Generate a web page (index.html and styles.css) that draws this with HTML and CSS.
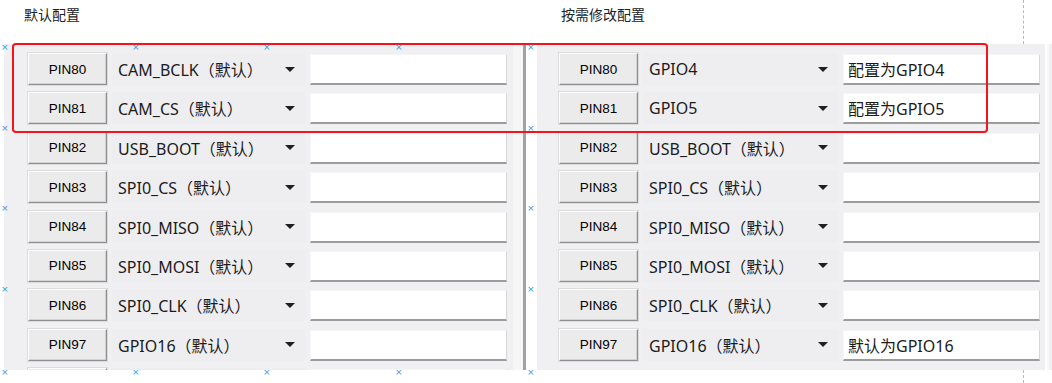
FILE: index.html
```html
<!DOCTYPE html>
<html lang="zh-CN">
<head>
    <meta charset="UTF-8">
    <title>引脚配置</title>
    <link rel="stylesheet" href="styles.css">
</head>
<body>
    <div class="canvas">
        <div class="title title-left">默认配置</div>
        <div class="title title-right">按需修改配置</div>

        <!-- 默认配置 -->
        <div class="panel panel-left">
            <div class="row"><button class="pin-btn">PIN80</button><div class="combo"><span>CAM_BCLK（默认）</span><i class="arrow"></i></div><input class="value" type="text"></div>
            <div class="row"><button class="pin-btn">PIN81</button><div class="combo"><span>CAM_CS（默认）</span><i class="arrow"></i></div><input class="value" type="text"></div>
            <div class="row"><button class="pin-btn">PIN82</button><div class="combo"><span>USB_BOOT（默认）</span><i class="arrow"></i></div><input class="value" type="text"></div>
            <div class="row"><button class="pin-btn">PIN83</button><div class="combo"><span>SPI0_CS（默认）</span><i class="arrow"></i></div><input class="value" type="text"></div>
            <div class="row"><button class="pin-btn">PIN84</button><div class="combo"><span>SPI0_MISO（默认）</span><i class="arrow"></i></div><input class="value" type="text"></div>
            <div class="row"><button class="pin-btn">PIN85</button><div class="combo"><span>SPI0_MOSI（默认）</span><i class="arrow"></i></div><input class="value" type="text"></div>
            <div class="row"><button class="pin-btn">PIN86</button><div class="combo"><span>SPI0_CLK（默认）</span><i class="arrow"></i></div><input class="value" type="text"></div>
            <div class="row"><button class="pin-btn">PIN97</button><div class="combo"><span>GPIO16（默认）</span><i class="arrow"></i></div><input class="value" type="text"></div>
            <!-- 下一行只露出顶边 -->
            <div class="row"><button class="pin-btn"></button><div class="combo"></div><input class="value" type="text"></div>
        </div>

        <div class="splitter"><div class="splitter-line"></div></div>

        <!-- 按需修改配置 -->
        <div class="panel panel-right">
            <div class="row"><button class="pin-btn">PIN80</button><div class="combo"><span>GPIO4</span><i class="arrow"></i></div><input class="value" type="text" value="配置为GPIO4"></div>
            <div class="row"><button class="pin-btn">PIN81</button><div class="combo"><span>GPIO5</span><i class="arrow"></i></div><input class="value" type="text" value="配置为GPIO5"></div>
            <div class="row"><button class="pin-btn">PIN82</button><div class="combo"><span>USB_BOOT（默认）</span><i class="arrow"></i></div><input class="value" type="text"></div>
            <div class="row"><button class="pin-btn">PIN83</button><div class="combo"><span>SPI0_CS（默认）</span><i class="arrow"></i></div><input class="value" type="text"></div>
            <div class="row"><button class="pin-btn">PIN84</button><div class="combo"><span>SPI0_MISO（默认）</span><i class="arrow"></i></div><input class="value" type="text"></div>
            <div class="row"><button class="pin-btn">PIN85</button><div class="combo"><span>SPI0_MOSI（默认）</span><i class="arrow"></i></div><input class="value" type="text"></div>
            <div class="row"><button class="pin-btn">PIN86</button><div class="combo"><span>SPI0_CLK（默认）</span><i class="arrow"></i></div><input class="value" type="text"></div>
            <div class="row"><button class="pin-btn">PIN97</button><div class="combo"><span>GPIO16（默认）</span><i class="arrow"></i></div><input class="value" type="text" value="默认为GPIO16"></div>
        </div>

        <div class="edge"></div>

        <!-- 设计器辅助线与标记 -->
        <div class="guide guide-top"></div>
        <div class="guide guide-bottom"></div>
        <div class="highlight"></div>

        <span class="mark" style="left:1px;top:44px">×</span>
        <span class="mark" style="left:132px;top:44px">×</span>
        <span class="mark" style="left:263px;top:44px">×</span>
        <span class="mark" style="left:395px;top:44px">×</span>
        <span class="mark" style="left:527px;top:44px">×</span>
        <span class="mark" style="left:1px;top:125px">×</span>
        <span class="mark" style="left:527px;top:125px">×</span>
        <span class="mark" style="left:1px;top:205px">×</span>
        <span class="mark" style="left:527px;top:205px">×</span>
        <span class="mark" style="left:1px;top:286px">×</span>
        <span class="mark" style="left:527px;top:286px">×</span>
        <span class="mark" style="left:1px;top:369px">×</span>
        <span class="mark" style="left:132px;top:369px">×</span>
        <span class="mark" style="left:263px;top:369px">×</span>
        <span class="mark" style="left:395px;top:369px">×</span>
        <span class="mark" style="left:527px;top:369px">×</span>
    </div>
</body>
</html>
```

FILE: styles.css
```css
* {
    margin: 0;
    padding: 0;
    box-sizing: border-box;
}

body {
    background-color: #ffffff;
    font-family: "Noto Sans", "Noto Sans CJK SC", sans-serif;
    color: #1b1b1b;
    overflow: hidden;
}

.canvas {
    position: relative;
    width: 1052px;
    height: 383px;
    display: grid;
    grid-template-columns: 4px 509px 24px 508px 1fr;
    grid-template-rows: 44px 326px 1fr;
}

.title {
    grid-row: 1;
    font-size: 14px;
    line-height: 30px;
    color: #222;
}

.title-left {
    grid-column: 2;
    padding-left: 20px;
}

.title-right {
    grid-column: 4;
    padding-left: 24px;
}

.panel {
    grid-row: 2;
    background-color: #f0f0f2;
    overflow: hidden;
    display: flex;
    flex-direction: column;
    gap: 7.4px;
    padding-top: 9px;
}

.panel-left {
    grid-column: 2;
    padding-left: 24px;
    padding-right: 6px;
}

.panel-right {
    grid-column: 4;
    padding-left: 22px;
    padding-right: 5px;
}

.row {
    flex: none;
    height: 32px;
    display: grid;
    grid-template-columns: 79px 1fr 197px;
    column-gap: 5px;
}

.pin-btn {
    font-family: "Liberation Sans", Arial, sans-serif;
    font-size: 13.5px;
    color: #000;
    background-color: #ebebeb;
    border: 1px solid #fdfdfd;
    border-right-color: #8f8f8f;
    border-bottom-color: #8f8f8f;
    box-shadow: inset -1px -1px 0 #d2d2d2, 0 0 0 1px #dcdcdc;
}

.combo {
    display: flex;
    align-items: center;
    justify-content: space-between;
    padding: 0 10px 0 6px;
    font-size: 16px;
    background-color: #eeeef1;
}

.arrow {
    width: 0;
    height: 0;
    border-left: 5px solid transparent;
    border-right: 5px solid transparent;
    border-top: 5px solid #1f1f1f;
}

.value {
    height: 31px;
    align-self: start;
    margin-top: 1px;
    padding: 0 4px;
    font-family: "Noto Sans", "Noto Sans CJK SC", sans-serif;
    font-size: 16px;
    color: #1b1b1b;
    background-color: #fff;
    border: 1px solid #f6f6f6;
    border-right-color: #d6d6d6;
    border-bottom: 2px solid #9c9c9c;
    outline: none;
}

.splitter {
    grid-row: 2;
    grid-column: 3;
    display: flex;
}

.splitter-line {
    width: 13px;
    background-color: #f6f6f6;
    border-right: 3px solid #a2a2a2;
}

.edge {
    grid-row: 2;
    grid-column: 5;
    background-color: #f0f0f2;
    border-left: 2px solid #fafafa;
    margin-left: 2px;
}

.guide {
    position: absolute;
    left: 1023px;
    width: 0;
    border-left: 1px dashed #b8b8b8;
}

.guide-top {
    top: 0;
    height: 44px;
}

.guide-bottom {
    top: 370px;
    height: 13px;
}

.highlight {
    position: absolute;
    left: 12px;
    top: 43px;
    width: 976px;
    height: 90px;
    border: 2px solid #f5141c;
    border-radius: 4px;
}

.mark {
    position: absolute;
    width: 7px;
    height: 7px;
    font-family: "DejaVu Sans", sans-serif;
    font-size: 9px;
    line-height: 7px;
    text-align: center;
    color: #2a9de6;
}
```
